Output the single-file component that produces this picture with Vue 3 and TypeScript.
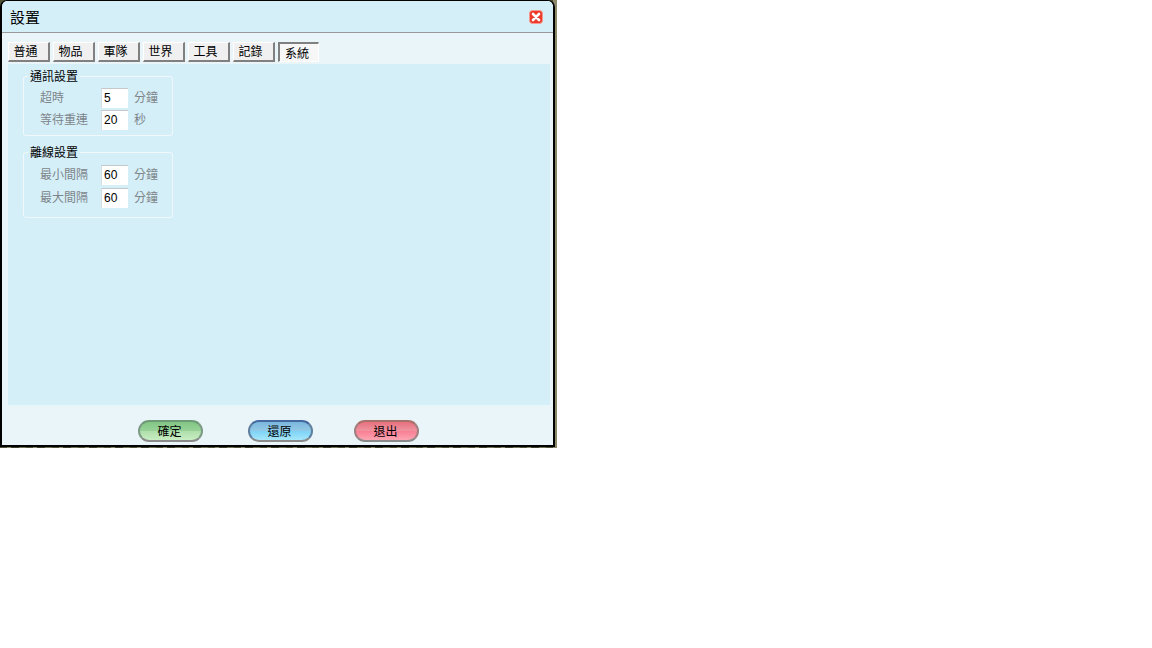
<script setup lang="ts">
const tabs = ['普通', '物品', '軍隊', '世界', '工具', '記錄', '系統']
const groups = [
  { title: '通訊設置', rows: [
    { label: '超時', value: '5', unit: '分鐘' },
    { label: '等待重連', value: '20', unit: '秒' },
  ] },
  { title: '離線設置', rows: [
    { label: '最小間隔', value: '60', unit: '分鐘' },
    { label: '最大間隔', value: '60', unit: '分鐘' },
  ] },
]
const buttons = [
  { label: '確定', kind: 'green' },
  { label: '還原', kind: 'blue' },
  { label: '退出', kind: 'red' },
]
</script>

<template>
  <div class="stage">
    <div class="window">
      <header class="title">
        <span class="title-text">設置</span>
        <svg class="close" width="14" height="14" viewBox="0 0 14 14">
          <rect x="0.5" y="0.5" width="13" height="13" rx="3" fill="#ee3a2c" stroke="#f79a8c" />
          <path d="M4 4 L10 10 M10 4 L4 10" stroke="#fff" stroke-width="2.6" stroke-linecap="round" />
        </svg>
      </header>
      <nav class="tabs">
        <div v-for="(t, i) in tabs" :key="t" class="tab" :class="{ active: i === 6 }">{{ t }}</div>
      </nav>
      <main class="panel">
        <fieldset v-for="g in groups" :key="g.title" class="group">
          <legend>{{ g.title }}</legend>
          <div v-for="r in g.rows" :key="r.label" class="row">
            <span class="label">{{ r.label }}</span>
            <span class="input">{{ r.value }}</span>
            <span class="unit">{{ r.unit }}</span>
          </div>
        </fieldset>
      </main>
      <footer class="footer">
        <div v-for="b in buttons" :key="b.label" class="btn" :class="b.kind">{{ b.label }}</div>
      </footer>
    </div>
  </div>
</template>

<style>
html, body { margin: 0; background: #fff; }
</style>

<style scoped>
.stage {
  width: 557px;
  height: 448px;
  box-sizing: border-box;
  padding: 0 2px 1px 0;
  background: repeating-linear-gradient(90deg, #4e5232 0 7px, #8a8a6a 7px 11px, #3a3d28 11px 19px, #6f7350 19px 26px);
  font-family: "Noto Sans CJK TC", "Liberation Sans", sans-serif;
  font-size: 12px;
  line-height: 14px;
  color: #000;
}
.window {
  height: 100%;
  box-sizing: border-box;
  border: 2px solid #000;
  border-top-width: 1px;
  border-radius: 7px 7px 0 0;
  background: #eaf5f9;
  display: flex;
  flex-direction: column;
  overflow: hidden;
}
.title {
  flex: none;
  height: 28px;
  background: #d5eff9;
  border-bottom: 1px solid #9a9a9a;
  display: flex;
  align-items: center;
  justify-content: space-between;
  padding: 3px 10px 0 8px;
}
.title-text { font-size: 15px; line-height: 18px; margin-top: -2px; }
.close { margin-top: -3px; }
.tabs {
  display: flex;
  gap: 3px;
  padding: 9px 0 0 6px;
  height: 22px;
  flex: none;
}
.tab {
  width: 42px;
  height: 20px;
  box-sizing: border-box;
  background: #f0f0f0;
  border-style: solid;
  border-color: #fff #808080 #808080 #fff;
  border-width: 1px 2px 2px 1px;
  display: flex;
  align-items: center;
  justify-content: center;
  padding: 0 6px 1px 0;
}
.tab.active {
  width: 41px;
  background: #f7f7f7;
  border-color: #808080 #fff #fff #808080;
  border-width: 2px 1px 1px 2px;
  padding: 0 4px 0 0;
}
.panel {
  flex: 1;
  margin: 0 3px 0 6px;
  padding: 5px 0 0 15px;
  background: #d5eff9;
  min-height: 0;
}
.group {
  width: 150px;
  box-sizing: border-box;
  margin: 0 0 9px;
  padding: 4px 0 4px 16px;
  border: 1px solid #f0f8fb;
  border-radius: 3px;
  min-inline-size: 0;
}
.group:last-child { padding-bottom: 8px; padding-top: 4px; }
.group legend {
  padding: 0 2px;
  margin-left: -12px;
  line-height: 14px;
}
.row {
  display: flex;
  align-items: center;
  height: 22px;
  color: #7d8589;
}
.group:last-child .row { height: 23px; }
.label { width: 61px; margin-bottom: 2px; }
.input {
  width: 27px;
  height: 20px;
  box-sizing: border-box;
  background: #fff;
  border-top: 1px solid #c4c8ca;
  border-left: 1px solid #d8dcde;
  color: #000;
  font-family: "Liberation Sans", sans-serif;
  font-size: 12px;
  line-height: 19px;
  padding-left: 2px;
}
.unit { margin-left: 6px; margin-bottom: 2px; }
.footer {
  height: 40px;
  flex: none;
  display: flex;
  align-items: flex-start;
  padding: 15px 0 0 136px;
  box-sizing: border-box;
}
.btn {
  width: 65px;
  height: 22px;
  box-sizing: border-box;
  border-radius: 11px;
  border: 2px solid #7c8a80;
  border-bottom-color: #8a8a8a;
  display: flex;
  align-items: center;
  justify-content: center;
  margin-right: 45px;
  padding-right: 2px;
}
.btn.green { background: linear-gradient(#82c684 0%, #98d298 48%, #b0dfac 52%, #c8eec2 100%); border-top-color: #6f9a78; border-left-color: #7d9a84; border-right-color: #7d9a84; }
.btn.blue { background: linear-gradient(#7bb7dd 0%, #93c9e6 48%, #7ed3f7 52%, #a6e7fb 100%); border-top-color: #45689f; border-left-color: #5f7f9f; border-right-color: #5f7f9f; }
.btn.red { background: linear-gradient(#e8707f 0%, #ee939e 48%, #fa7f95 52%, #fba5b2 100%); border-top-color: #a8706a; border-left-color: #a08080; border-right-color: #a08080; margin-left: -4px; }
</style>
